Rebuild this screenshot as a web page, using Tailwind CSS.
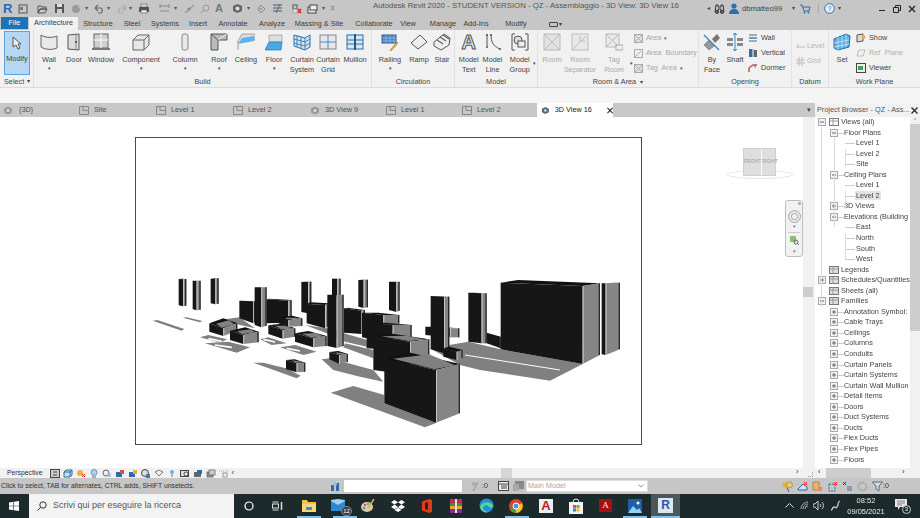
<!DOCTYPE html>
<html lang="it">
<head>
<meta charset="UTF-8">
<title>Autodesk Revit 2020</title>
<script src="https://cdn.jsdelivr.net/npm/@tailwindcss/browser@4"></script>
</head>
<body class="w-[920px] h-[518px] overflow-hidden bg-white">
<div class="w-[920px] h-[518px] flex flex-col blur-[0.4px] font-['Liberation_Sans',sans-serif] text-[7.3px] text-[#444]">

  <!-- title bar -->
  <div class="h-[17px] bg-[#c6c6c6] flex items-center relative">
    <span class="ml-[3px] w-[10px] text-[13px] font-bold leading-none text-[#1f6fb5]">R</span>
    <div class="ml-[5px] flex items-center gap-[6px]">
      <svg class="w-[10px] h-[10px]" viewBox="0 0 10 10"><rect x="1" y="1" width="8" height="8" fill="none" stroke="#555"/><rect x="2" y="3" width="3" height="3" fill="#777"/></svg>
      <svg class="w-[11px] h-[10px] ml-[3px]" viewBox="0 0 11 10"><path d="M1 2h3l1 1h4v2H3L1 9zM3 5h7L8 9H1z" fill="none" stroke="#555"/></svg>
      <svg class="w-[11px] h-[11px]" viewBox="0 0 11 11"><rect x="1" y="1" width="9" height="9" fill="#555"/><rect x="3" y="1" width="5" height="3" fill="#ddd"/><rect x="3" y="6" width="5" height="4" fill="#ccc"/></svg>
      <svg class="w-[11px] h-[11px]" viewBox="0 0 11 11"><circle cx="5" cy="6" r="4" fill="#999"/><path d="M6 1l4 2-2 3z" fill="#bbb"/></svg>
      <span class="text-[6px] -ml-[3px] text-[#555]">▾</span>
      <svg class="w-[11px] h-[10px]" viewBox="0 0 11 10"><path d="M1 4h6a3 3 0 010 5H4M1 4l3-3M1 4l3 3" fill="none" stroke="#666" stroke-width="1.2"/></svg>
      <span class="text-[6px] -ml-[4px] text-[#555]">▾</span>
      <svg class="w-[11px] h-[10px]" viewBox="0 0 11 10"><path d="M10 4H4a3 3 0 000 5h3M10 4L7 1M10 4L7 7" fill="none" stroke="#aaa" stroke-width="1.2"/></svg>
      <span class="text-[6px] -ml-[4px] text-[#555]">▾</span>
      <svg class="w-[12px] h-[11px]" viewBox="0 0 12 11"><rect x="1" y="4" width="10" height="5" fill="#555"/><rect x="3" y="1" width="6" height="3" fill="#ddd" stroke="#555" stroke-width=".6"/><rect x="3" y="7" width="6" height="3" fill="#eee" stroke="#555" stroke-width=".6"/></svg>
    </div>
    <div class="ml-[9px] flex items-center gap-[5px]">
      <svg class="w-[11px] h-[9px]" viewBox="0 0 11 9"><path d="M1 2h9M1 7h9M1 0v4M10 0v4" stroke="#888" fill="none"/></svg>
      <span class="text-[6px] -ml-[1px] text-[#555]">▾</span>
      <svg class="w-[11px] h-[10px] ml-[2px]" viewBox="0 0 11 10"><path d="M1 9l9-8" stroke="#999" stroke-width="1.4"/><circle cx="5" cy="5" r="1.5" fill="#888"/></svg>
      <svg class="w-[10px] h-[10px]" viewBox="0 0 10 10"><circle cx="6" cy="4" r="3" fill="none" stroke="#999"/><path d="M1 9l3-3" stroke="#999"/></svg>
      <span class="text-[11px] leading-none font-bold text-[#777]">A</span>
    </div>
    <div class="ml-[9px] flex items-center gap-[5px]">
      <svg class="w-[11px] h-[11px]" viewBox="0 0 11 11"><path d="M5.500 1l4.500 2v5l-4.500 2L1 8V3z" fill="#666"/><circle cx="5.500" cy="5.500" r="2" fill="#ddd"/></svg>
      <span class="text-[6px] -ml-[1px] text-[#555]">▾</span>
      <svg class="w-[10px] h-[10px] ml-[1px]" viewBox="0 0 10 10"><path d="M5 1l4 4-4 4-3-4z" fill="none" stroke="#888"/><circle cx="5" cy="5" r="1" fill="#888"/></svg>
      <svg class="w-[11px] h-[11px] ml-[1px]" viewBox="0 0 11 11"><path d="M1 2h9M1 5h9M1 8h9" stroke="#555"/><path d="M8 1L4 10" stroke="#2a7ac0"/></svg>
    </div>
    <div class="ml-[9px] flex items-center gap-[4px]">
      <svg class="w-[10px] h-[10px]" viewBox="0 0 10 10"><rect x="1" y="1" width="4" height="4" fill="none" stroke="#555"/><rect x="1" y="5" width="4" height="4" fill="#ddd" stroke="#888" stroke-width=".5"/><path d="M6 5l3 4M9 5L6 9" stroke="#d22" stroke-width="1.3"/></svg>
      <svg class="w-[11px] h-[10px] ml-[1px]" viewBox="0 0 11 10"><rect x="1" y="3" width="8" height="6" fill="#eee" stroke="#444"/><rect x="3" y="1" width="7" height="5" fill="#eee" stroke="#444"/></svg>
      <span class="text-[6px] text-[#555]">▾</span>
      <span class="text-[6px] ml-[2px] text-[#555]">≡</span>
    </div>
    <span class="absolute left-[373px] top-0 text-[7.800px] leading-[12px] whitespace-nowrap text-[#555]">Autodesk Revit 2020 - STUDENT VERSION - QZ - Assemblaggio - 3D View: 3D View 16</span>
    <div class="absolute left-[707px] top-0 h-[17px] flex items-center">
      <span class="text-[6px] text-[#444]">◂</span>
      <svg class="ml-[4px] w-[11px] h-[10px]" viewBox="0 0 11 10"><path d="M2 1h2v2h3V1h2l1 7H7V5H4v3H1z" fill="none" stroke="#333"/><circle cx="3" cy="8" r="1.500" fill="none" stroke="#333"/><circle cx="8" cy="8" r="1.500" fill="none" stroke="#333"/></svg>
      <svg class="ml-[4px] w-[10px] h-[11px]" viewBox="0 0 10 11"><circle cx="5" cy="3" r="2.600" fill="#2f6fb0"/><path d="M0 11c0-4 3-5 5-5s5 1 5 5z" fill="#2f6fb0"/></svg>
      <span class="ml-[3px] w-[40px] text-[7.600px] text-[#444]">dbmatteo99</span>
      <span class="ml-[10px] text-[6px] text-[#444]">▾</span>
      <svg class="ml-[5px] w-[11px] h-[10px]" viewBox="0 0 11 10"><path d="M0 1h2l2 6h5l1-4H3" fill="none" stroke="#2f6fa0"/><circle cx="4.500" cy="8.500" r="1" fill="#2f6fa0"/><circle cx="8.500" cy="8.500" r="1" fill="#2f6fa0"/></svg>
      <span class="ml-[7px] w-px h-[11px] bg-[#aaa]"></span>
      <svg class="ml-[5px] w-[11px] h-[11px]" viewBox="0 0 11 11"><circle cx="5.500" cy="5.500" r="4.800" fill="#e8eef5" stroke="#2f6fb0"/><text x="5.500" y="8" font-size="7" text-anchor="middle" fill="#2f6fb0" font-family="Liberation Sans">?</text></svg>
      <span class="ml-[3px] text-[6px] text-[#444]">▾</span>
    </div>
    <div class="absolute left-[879px] top-0 h-[17px] flex items-center">
      <span class="w-[6px] h-px mt-[4px] bg-[#222]"></span>
      <svg class="ml-[8px] w-[8px] h-[8px]" viewBox="0 0 8 8"><path d="M.5 2.500h5v5h-5zM2.500 2.500v-2h5v5h-2" fill="none" stroke="#222"/></svg>
      <svg class="ml-[7px] w-[8px] h-[8px]" viewBox="0 0 8 8"><path d="M1 1l6 6M7 1L1 7" stroke="#222" stroke-width="1.300"/></svg>
    </div>
  </div>

  <!-- ribbon tabs -->
  <div class="h-[13px] bg-[#c6c6c6] flex items-end text-[#3c3c3c]">
    <span class="ml-px w-[27px] h-[12px] mb-px bg-[#1b74b8] text-white flex items-center justify-center">File</span>
    <span class="ml-px w-[49px] h-[13px] bg-[#f1f1f1] flex items-center justify-center">Architecture</span>
    <div class="h-[12px] flex items-center whitespace-nowrap">
      <span class="w-[40px] text-center">Structure</span>
      <span class="w-[28px] text-center">Steel</span>
      <span class="w-[38px] text-center">Systems</span>
      <span class="w-[28px] text-center">Insert</span>
      <span class="w-[42px] text-center">Annotate</span>
      <span class="w-[36px] text-center">Analyze</span>
      <span class="w-[58px] text-center">Massing &amp; Site</span>
      <span class="w-[52px] text-center">Collaborate</span>
      <span class="w-[16px] text-center">View</span>
      <span class="ml-[10px] w-[34px] text-center">Manage</span>
      <span class="w-[32px] text-center">Add-Ins</span>
      <span class="w-[48px] text-center">Modify</span>
      <span class="ml-[9px] flex items-center gap-[1px]"><span class="w-[9px] h-[5px] border border-[#444] rounded-[1px]"></span><span class="text-[6px]">▾</span></span>
    </div>
  </div>

  <!-- ribbon panels -->
  <div class="h-[58px] bg-[#f1f1f1] border-b border-[#dcdcdc] flex text-center leading-[9.600px]">
    <section class="w-[34px] flex flex-col border-r border-[#e2e2e2]">
      <div class="h-[46px] pt-px pl-[4px]">
        <div class="w-[26px] h-[44px] bg-[#b5d7f3] border border-[#5fa4d8] flex flex-col items-center">
          <svg class="w-[12px] h-[14px] mt-[4px]" viewBox="0 0 12 14"><path d="M2 1v10l3-2 2 4 2-1-2-4h3z" fill="#eee" stroke="#555"/></svg>
          <span class="mt-[4px]">Modify</span>
        </div>
      </div>
      <div class="h-[11px] leading-[11px] flex items-center pl-[4px]">Select <span class="text-[6px] ml-[3px]">▾</span></div>
    </section>

    <section class="w-[338px] flex flex-col border-r border-[#e2e2e2]">
      <div class="h-[46px] flex">
        <div class="w-[30px] flex flex-col items-center pt-[3px]"><svg class="w-[18px] h-[18px]" viewBox="0 0 18 18"><path d="M1 2c5 3 11 3 16 1v12c-5 2-11 2-16-1z" fill="#e8e8e8" stroke="#666"/></svg><span class="mt-[4px]">Wall</span><span class="text-[5px] leading-[7px]">▾</span></div>
        <div class="w-[20px] flex flex-col items-center pt-[3px]"><svg class="w-[14px] h-[18px]" viewBox="0 0 14 18"><path d="M1 2l11-1v16l-11-1z" fill="#ddd" stroke="#555"/><path d="M9 2v14" stroke="#888"/><circle cx="9" cy="9" r=".9" fill="#333"/></svg><span class="mt-[4px]">Door</span></div>
        <div class="w-[34px] flex flex-col items-center pt-[3px]"><svg class="w-[18px] h-[18px]" viewBox="0 0 18 18"><rect x="2" y="1" width="14" height="14" fill="#cfcfcf" stroke="#666"/><path d="M9 1v14M2 7h14" stroke="#eee" stroke-width="1.500"/><path d="M0 16h18" stroke="#777" stroke-width="2"/></svg><span class="mt-[4px]">Window</span></div>
        <div class="w-[46px] flex flex-col items-center pt-[3px]"><svg class="w-[18px] h-[18px]" viewBox="0 0 18 18"><path d="M1 7l5-5h11v10l-5 5H1z" fill="#e6e6e6" stroke="#666"/><path d="M1 7h11v10M12 7l5-5" fill="none" stroke="#666"/></svg><span class="mt-[4px]">Component</span><span class="text-[5px] leading-[7px]">▾</span></div>
        <div class="w-[42px] flex flex-col items-center pt-[3px]"><svg class="w-[10px] h-[18px]" viewBox="0 0 10 18"><rect x="2" y="1" width="6" height="16" rx="2" fill="#e8e8e8" stroke="#888"/></svg><span class="mt-[4px]">Column</span><span class="text-[5px] leading-[7px]">▾</span></div>
        <div class="w-[26px] flex flex-col items-center pt-[3px]"><svg class="w-[18px] h-[18px]" viewBox="0 0 18 18"><path d="M1 1h16v6H8v10H1z" fill="#bbb" stroke="#555"/><path d="M1 1l7 6" stroke="#555"/><path d="M17 1l-9 6" stroke="#eee"/></svg><span class="mt-[4px]">Roof</span><span class="text-[5px] leading-[7px]">▾</span></div>
        <div class="w-[28px] flex flex-col items-center pt-[3px]"><svg class="w-[18px] h-[18px]" viewBox="0 0 18 18"><path d="M5 1h13v6L0 10z" fill="#ddd" stroke="#888" stroke-width=".7"/><path d="M5 5l12-2v5L1 11z" fill="#5eb2ea"/><path d="M1 11v6" stroke="#999"/></svg><span class="mt-[4px]">Ceiling</span></div>
        <div class="w-[28px] flex flex-col items-center pt-[3px]"><svg class="w-[18px] h-[18px]" viewBox="0 0 18 18"><path d="M4 9V2h13v7z" fill="#ddd" stroke="#999" stroke-width=".7"/><path d="M4 9h13l-1 8H0z" fill="#4ba7e6" stroke="#2a7ab5" stroke-width=".7"/></svg><span class="mt-[4px]">Floor</span><span class="text-[5px] leading-[7px]">▾</span></div>
        <div class="w-[28px] flex flex-col items-center pt-[3px]"><svg class="w-[18px] h-[18px]" viewBox="0 0 18 18"><path d="M1 2l11 3 5-3v12l-5 3-11-4z" fill="#cfe5f5" stroke="#2a6fa8"/><path d="M4 3v11M8 4v12M12 5v12M1 6l11 3 5-3M1 10l11 3 5-3" stroke="#2a6fa8" stroke-width=".8" fill="none"/></svg><span class="mt-[4px]">Curtain<br>System</span></div>
        <div class="w-[24px] flex flex-col items-center pt-[3px]"><svg class="w-[18px] h-[18px]" viewBox="0 0 18 18"><rect x="1" y="2" width="16" height="14" fill="#e6e6e6" stroke="#888"/><path d="M1 9h16M9 2v14" stroke="#3d8fd0"/></svg><span class="mt-[4px]">Curtain<br>Grid</span></div>
        <div class="w-[30px] flex flex-col items-center pt-[3px]"><svg class="w-[18px] h-[18px]" viewBox="0 0 18 18"><rect x="1" y="2" width="16" height="14" fill="#d6e6f3" stroke="#2a6fa8"/><path d="M1 7h16M1 11h16" stroke="#2a6fa8"/><path d="M9 1v16" stroke="#1d5a90" stroke-width="2"/></svg><span class="mt-[4px]">Mullion</span></div>
      </div>
      <div class="h-[11px] leading-[11px]">Build</div>
    </section>

    <section class="w-[83px] flex flex-col border-r border-[#e2e2e2]">
      <div class="h-[46px] flex">
        <div class="w-[36px] flex flex-col items-center pt-[3px]"><svg class="w-[18px] h-[18px]" viewBox="0 0 18 18"><rect x="1" y="2" width="14" height="8" fill="#4a86c0" stroke="#2a5f95"/><path d="M1 5h14M1 8h14M5 2v8M9 2v8M13 2v8" stroke="#bcd6ee" stroke-width=".5"/><path d="M16 9l-6 7-1 2 2-1 6-7z" fill="#e2b23a" stroke="#8a6a18" stroke-width=".5"/></svg><span class="mt-[4px]">Railing</span><span class="text-[5px] leading-[7px]">▾</span></div>
        <div class="w-[22px] flex flex-col items-center pt-[3px]"><svg class="w-[18px] h-[18px]" viewBox="0 0 18 18"><path d="M1 10l9-8 7 7-9 7z" fill="#eee" stroke="#555"/></svg><span class="mt-[4px]">Ramp</span></div>
        <div class="w-[24px] flex flex-col items-center pt-[3px]"><svg class="w-[18px] h-[18px]" viewBox="0 0 18 18"><path d="M1 9l10-8 6 4-1 7-8 5-7-4z" fill="#eee" stroke="#555"/><path d="M4 7l6 4M7 4l6 4M10 2l6 4" stroke="#666" stroke-width="1.300"/></svg><span class="mt-[4px]">Stair</span></div>
      </div>
      <div class="h-[11px] leading-[11px]">Circulation</div>
    </section>

    <section class="w-[83px] flex flex-col border-r border-[#e2e2e2]">
      <div class="h-[46px] flex">
        <div class="w-[28px] flex flex-col items-center pt-[3px]"><span class="h-[18px] text-[20px] leading-[18px] font-bold text-[#e8e8e8] [-webkit-text-stroke:1px_#555]">A</span><span class="mt-[4px]">Model<br>Text</span></div>
        <div class="w-[20px] flex flex-col items-center pt-[3px]"><svg class="w-[18px] h-[18px]" viewBox="0 0 18 18"><path d="M3 1v12M7 1c0 8 2 12 9 15" fill="none" stroke="#555"/><circle cx="3" cy="2" r="1" fill="#555"/><circle cx="3" cy="14" r="1" fill="#555"/><circle cx="7" cy="2" r="1" fill="#555"/><circle cx="16" cy="16" r="1" fill="#555"/></svg><span class="mt-[4px]">Model<br>Line</span></div>
        <div class="w-[35px] flex flex-col items-center pt-[3px] relative"><svg class="w-[18px] h-[18px]" viewBox="0 0 18 18"><path d="M4 1H1v16h3M14 1h3v16h-3" fill="none" stroke="#555"/><circle cx="7" cy="7" r="4" fill="#ddd" stroke="#555"/><rect x="7" y="8" width="7" height="6" fill="#eee" stroke="#555"/></svg><span class="mt-[4px]">Model<br>Group</span><span class="absolute right-[1px] top-[29px] text-[5px]">▾</span></div>
      </div>
      <div class="h-[11px] leading-[11px]">Model</div>
    </section>

    <section class="w-[161px] flex flex-col border-r border-[#e2e2e2]">
      <div class="h-[46px] flex text-[#a9a9a9]">
        <div class="w-[28px] flex flex-col items-center pt-[3px]"><svg class="w-[18px] h-[18px]" viewBox="0 0 18 18"><rect x="1" y="1" width="16" height="16" fill="#e2e2e2" stroke="#bbb"/><path d="M1 1l16 16M17 1L1 17" stroke="#bbb"/></svg><span class="mt-[4px]">Room</span></div>
        <div class="w-[28px] flex flex-col items-center pt-[3px] whitespace-nowrap"><svg class="w-[18px] h-[18px]" viewBox="0 0 18 18"><rect x="1" y="1" width="16" height="16" fill="#e8e8e8" stroke="#bbb"/><path d="M1 17L15 3M9 3v5h5" stroke="#bbb" fill="none"/></svg><span class="mt-[4px]">Room<br>Separator</span></div>
        <div class="w-[40px] flex flex-col items-center pt-[3px] relative"><svg class="w-[18px] h-[18px]" viewBox="0 0 18 18"><rect x="1" y="1" width="13" height="13" fill="#e8e8e8" stroke="#bbb"/><path d="M1 1l13 13M14 1L1 14" stroke="#bbb"/><rect x="11" y="12" width="7" height="5" fill="#eee" stroke="#aaa"/></svg><span class="mt-[4px]">Tag<br>Room</span><span class="absolute right-[1px] top-[29px] text-[5px] text-[#444]">▾</span></div>
        <div class="flex flex-col gap-[5px] pt-[3px] text-left whitespace-nowrap">
          <div class="h-[10px] leading-[10px] flex items-center gap-[3px]"><svg class="w-[9px] h-[9px]" viewBox="0 0 9 9"><rect x=".5" y=".5" width="8" height="8" fill="#e2e2e2" stroke="#aaa"/><path d="M1 1l7 7M8 1L1 8" stroke="#aaa"/></svg>Area <span class="text-[5px] text-[#555]">▾</span></div>
          <div class="h-[10px] leading-[10px] flex items-center gap-[3px]"><svg class="w-[9px] h-[9px]" viewBox="0 0 9 9"><rect x=".5" y=".5" width="8" height="8" fill="#eee" stroke="#aaa"/><path d="M1 8l6-6" stroke="#aaa"/></svg>Area&nbsp; Boundary</div>
          <div class="h-[10px] leading-[10px] flex items-center gap-[3px]"><svg class="w-[9px] h-[9px]" viewBox="0 0 9 9"><rect x=".5" y=".5" width="8" height="8" fill="#e2e2e2" stroke="#aaa"/><path d="M1 1l7 7M8 1L1 8" stroke="#aaa"/></svg>Tag&nbsp; Area <span class="text-[5px] text-[#555]">▾</span></div>
        </div>
      </div>
      <div class="h-[11px] leading-[11px]">Room &amp; Area <span class="text-[6px] ml-[2px]">▾</span></div>
    </section>

    <section class="w-[93px] flex flex-col border-r border-[#e2e2e2]">
      <div class="h-[46px] flex">
        <div class="w-[26px] flex flex-col items-center pt-[3px]"><svg class="w-[18px] h-[18px]" viewBox="0 0 18 18"><path d="M1 12l5-5 5 6-5 4z" fill="#999" stroke="#666" stroke-width=".6"/><path d="M9 6l5-5 3 4-5 5z" fill="#777"/><path d="M1 2l15 15" stroke="#2d86cc" stroke-width="1.200"/></svg><span class="mt-[4px]">By<br>Face</span></div>
        <div class="w-[20px] flex flex-col items-center pt-[3px]"><svg class="w-[18px] h-[18px]" viewBox="0 0 18 18"><path d="M1 5h6v3H1zM11 5h6v3h-6zM1 10h6v3H1zM11 10h6v3h-6z" fill="#888"/><path d="M9 0v18M7 2l2-2 2 2M7 16l2 2 2-2" stroke="#2d86cc" fill="none"/></svg><span class="mt-[4px]">Shaft</span></div>
        <div class="flex flex-col gap-[5px] pt-[3px] text-left pl-[3px]">
          <div class="h-[10px] leading-[10px] flex items-center gap-[3px]"><svg class="w-[10px] h-[10px]" viewBox="0 0 10 10"><path d="M1 2h8M1 8h8" stroke="#666"/><path d="M1 5h8" stroke="#2d86cc" stroke-width="1.500"/></svg>Wall</div>
          <div class="h-[10px] leading-[10px] flex items-center gap-[3px]"><svg class="w-[10px] h-[10px]" viewBox="0 0 10 10"><path d="M1 1h3v8H1z" fill="#2d6da6"/><path d="M6 2h3v7H6z" fill="#666"/><path d="M5 1v8" stroke="#2d86cc"/></svg>Vertical</div>
          <div class="h-[10px] leading-[10px] flex items-center gap-[3px]"><svg class="w-[10px] h-[10px]" viewBox="0 0 10 10"><path d="M1 9V5l4-3h4" fill="none" stroke="#c9553f" stroke-width="1.500"/><path d="M7 1v4" stroke="#2d86cc"/></svg>Dormer</div>
        </div>
      </div>
      <div class="h-[11px] leading-[11px]">Opening</div>
    </section>

    <section class="w-[37px] flex flex-col border-r border-[#e2e2e2]">
      <div class="h-[46px] flex flex-col gap-[5px] pt-[11px] pl-[4px] text-left text-[#b5b5b5]">
        <div class="h-[10px] leading-[10px] flex items-center gap-[2px]"><svg class="w-[9px] h-[9px]" viewBox="0 0 9 9"><path d="M0 5h9" stroke="#bbb"/><path d="M2 2v3" stroke="#bbb"/></svg>Level</div>
        <div class="h-[10px] leading-[10px] flex items-center gap-[2px]"><svg class="w-[9px] h-[9px]" viewBox="0 0 9 9"><path d="M0 3h9M0 6h9M3 0v9M6 0v9" stroke="#bbb"/></svg>Grid</div>
      </div>
      <div class="h-[11px] leading-[11px] text-[#444]">Datum</div>
    </section>

    <section class="flex-1 flex flex-col">
      <div class="h-[46px] flex">
        <div class="w-[26px] flex flex-col items-center pt-[3px]"><svg class="w-[18px] h-[18px]" viewBox="0 0 18 18"><path d="M1 6l12-5 4 2-1 11-11 3-4-2z" fill="#5dafe6" stroke="#1f6aa5"/><path d="M5 4v13M9 2.500v13M13 1v13M1 10l15-3M1 14l15-3" stroke="#d5ecfb" stroke-width=".7"/></svg><span class="mt-[4px]">Set</span></div>
        <div class="flex flex-col gap-[5px] pt-[3px] text-left pl-px">
          <div class="h-[10px] leading-[10px] flex items-center gap-[3px]"><svg class="w-[10px] h-[10px]" viewBox="0 0 10 10"><path d="M1 2l6-1v7l-6 1z" fill="#ddd" stroke="#555"/><circle cx="7.500" cy="4" r="2" fill="#e8b23a"/></svg>Show</div>
          <div class="h-[10px] leading-[10px] flex items-center gap-[3px] text-[#b0b0b0]"><svg class="w-[10px] h-[10px]" viewBox="0 0 10 10"><path d="M1 8l2-6h6l-2 6z" fill="none" stroke="#bbb"/></svg>Ref&nbsp; Plane</div>
          <div class="h-[10px] leading-[10px] flex items-center gap-[3px]"><svg class="w-[10px] h-[10px]" viewBox="0 0 10 10"><rect x=".5" y=".5" width="9" height="9" fill="#e8f0e0" stroke="#444"/><rect x="2" y="3" width="5" height="4" fill="#4a9a5a"/></svg>Viewer</div>
        </div>
      </div>
      <div class="h-[11px] leading-[11px]">Work Plane</div>
    </section>
  </div>

  <div class="h-[15px] bg-[#f5f5f5]"></div>

  <!-- view tabs -->
  <div class="h-[14px] bg-[#c8c8c8] flex items-center text-[#555]">
    <div class="w-[77px] pl-[3px] flex items-center gap-[6px]"><svg class="w-[10px] h-[9px]" viewBox="0 0 10 9"><path d="M5 .5l4 2v4l-4 2-4-2v-4z" fill="#999"/><circle cx="5" cy="4.500" r="1.500" fill="#ddd"/></svg>{3D}</div>
    <div class="w-[77px] pl-[2px] flex items-center gap-[5px]"><svg class="w-[10px] h-[9px]" viewBox="0 0 10 9"><path d="M.5.5h9v8h-9zM4 .5v4h5.500" fill="none" stroke="#888"/></svg>Site</div>
    <div class="w-[77px] pl-[2px] flex items-center gap-[5px]"><svg class="w-[10px] h-[9px]" viewBox="0 0 10 9"><path d="M.5.5h9v8h-9zM4 .5v4h5.500" fill="none" stroke="#888"/></svg>Level 1</div>
    <div class="w-[77px] pl-[2px] flex items-center gap-[5px]"><svg class="w-[10px] h-[9px]" viewBox="0 0 10 9"><path d="M.5.5h9v8h-9zM4 .5v4h5.500" fill="none" stroke="#888"/></svg>Level 2</div>
    <div class="w-[76px] pl-[2px] flex items-center gap-[5px]"><svg class="w-[10px] h-[9px]" viewBox="0 0 10 9"><path d="M5 .5l4 2v4l-4 2-4-2v-4z" fill="#999"/><circle cx="5" cy="4.500" r="1.500" fill="#ddd"/></svg>3D View 9</div>
    <div class="w-[76px] pl-[2px] flex items-center gap-[5px]"><svg class="w-[10px] h-[9px]" viewBox="0 0 10 9"><path d="M.5.5h9v8h-9zM4 .5v4h5.500" fill="none" stroke="#888"/></svg>Level 1</div>
    <div class="w-[77px] pl-[2px] flex items-center gap-[5px]"><svg class="w-[10px] h-[9px]" viewBox="0 0 10 9"><path d="M.5.5h9v8h-9zM4 .5v4h5.500" fill="none" stroke="#888"/></svg>Level 2</div>
    <div class="w-[76px] h-[14px] bg-white pl-[4px] flex items-center text-[#222] whitespace-nowrap font-medium"><svg class="w-[10px] h-[9px] mr-[5px]" viewBox="0 0 10 9"><path d="M5 .5l4 2v4l-4 2-4-2v-4z" fill="#4d6d80"/><circle cx="5" cy="4.500" r="1.500" fill="#ddd"/></svg>3D View 16<svg class="ml-[15px] w-[7px] h-[7px]" viewBox="0 0 7 7"><path d="M.5.500l6 6M6.500.500l-6 6" stroke="#222" stroke-width="1.200"/></svg></div>
    <span class="w-[202px] pr-[4px] text-right text-[7px] text-[#444]">▾</span>
    <div class="w-[105px] h-[14px] bg-[#f1f1f1] pl-[2px] flex items-center justify-between pr-[2px] text-[#555] whitespace-nowrap">Project Browser - QZ - Ass...<svg class="w-[7px] h-[7px]" viewBox="0 0 7 7"><path d="M.5.500l6 6M6.500.500l-6 6" stroke="#222" stroke-width="1.200"/></svg></div>
  </div>

  <!-- work area -->
  <div class="h-[351px] flex">
    <div class="w-[813px] flex">
      <div class="w-[803px] h-[351px] bg-white relative overflow-hidden">
        <div class="absolute left-[135px] top-[20px] w-[507px] h-[308px] border border-[#4a4a4a]"></div>
        <svg id="model" class="absolute left-0 top-0" width="803" height="351" viewBox="0 117 803 351"></svg>

        <!-- view cube -->
        <div class="absolute left-[726px] top-[30px] w-[68px] h-[34px]">
          <div class="absolute left-[1px] top-[23px] w-[66px] h-[9px] rounded-[50%] border border-[#e4e4e4]"></div>
          <div class="absolute left-[17px] top-[1px] w-[33px] h-[28px] bg-[#dedede] border border-[#cfcfcf] flex text-[5px] text-[#a0a0a0]">
            <span class="flex-1 flex items-center justify-center border-r border-white">FRONT</span>
            <span class="flex-1 flex items-center justify-center">RIGHT</span>
          </div>
        </div>

        <!-- navigation bar -->
        <div class="absolute left-[785px] top-[83px] w-[18px] h-[57px] bg-[#f2f2f2] border border-[#bdbdbd] rounded-[3px] flex flex-col items-center">
          <span class="absolute right-[1px] top-[1px] w-[3px] h-[3px] rounded-full bg-[#aaa]"></span>
          <svg class="mt-[9px] w-[13px] h-[13px]" viewBox="0 0 13 13"><circle cx="6.500" cy="6.500" r="6" fill="#e4e4e4" stroke="#aaa"/><circle cx="6.500" cy="6.500" r="3" fill="#f4f4f4" stroke="#aaa"/></svg>
          <span class="text-[5px] leading-[7px] text-[#777]">▾</span>
          <span class="w-[12px] h-px bg-[#ccc] mt-[2px]"></span>
          <svg class="mt-[3px] w-[9px] h-[9px]" viewBox="0 0 9 9"><rect x="0" y="0" width="6" height="6" fill="#8bbf73"/><circle cx="6" cy="6" r="2" fill="none" stroke="#666"/><path d="M7.500 7.500L9 9" stroke="#666"/></svg>
          <span class="mt-[3px] text-[5px] leading-[7px] text-[#777]">▾</span>
        </div>
      </div>
      <!-- vertical scrollbar -->
      <div class="w-[10px] bg-[#f1f1f1] flex flex-col"><div class="h-[170px]"></div><div class="h-[10px] bg-[#cdcdcd]"></div></div>
    </div>
    <div class="w-[2px] bg-[#f1f1f1]"></div>

    <!-- project browser -->
    <div class="flex-1 bg-white relative overflow-hidden">
      <div id="tree" class="text-[#444]"></div>
      <div class="absolute right-0 top-0 w-[10px] h-[351px] bg-[#f1f1f1]"><div class="h-[7px] text-center text-[5px] leading-[7px]">⌃</div><div class="h-[207px] bg-[#cdcdcd]"></div></div>
    </div>
  </div>

  <!-- view control bar / scrollbars -->
  <div class="h-[10px] bg-[#f1f1f1] flex items-center text-[6.800px] relative">
    <span class="ml-[7px] text-[#333]">Perspective</span>
    <div class="ml-[7px] flex items-center gap-[3px]">
      <svg class="w-[10px] h-[9px]" viewBox="0 0 10 9"><rect x=".5" y=".5" width="9" height="8" fill="#ccc" stroke="#444"/><path d="M3 3h4M3 6h4" stroke="#444"/></svg>
      <svg class="w-[10px] h-[9px]" viewBox="0 0 10 9"><path d="M1 3l2-2h6v5l-2 2H1zM1 3h6v5M7 3l2-2" fill="#cfe0ee" stroke="#1f6aa5"/></svg>
      <svg class="w-[10px] h-[9px]" viewBox="0 0 10 9"><circle cx="4" cy="4" r="3" fill="#eab43a"/><path d="M6 5l3 3M9 5L6 8" stroke="#d22"/></svg>
      <svg class="w-[10px] h-[9px]" viewBox="0 0 10 9"><circle cx="5" cy="3.500" r="3" fill="#a8d2ee" stroke="#2d6da6" stroke-width=".6"/><path d="M3 8h4" stroke="#666"/></svg>
      <svg class="w-[10px] h-[9px]" viewBox="0 0 10 9"><circle cx="4" cy="4" r="3" fill="#eee" stroke="#666"/><circle cx="7" cy="6" r="2" fill="#8fbfe0"/></svg>
      <svg class="w-[10px] h-[9px]" viewBox="0 0 10 9"><rect x="1" y="3" width="6" height="5" fill="#2d6da6"/><rect x="5" y="1" width="4" height="4" fill="#c9553f"/></svg>
      <svg class="w-[10px] h-[9px]" viewBox="0 0 10 9"><rect x="1" y="3" width="6" height="5" fill="#2d6da6"/><rect x="5" y="1" width="4" height="4" fill="#e8b23a"/></svg>
      <svg class="w-[10px] h-[9px]" viewBox="0 0 10 9"><circle cx="4" cy="4" r="3.500" fill="#ddd" stroke="#444"/><rect x="5" y="5" width="4" height="4" fill="#4d7a9a"/></svg>
      <svg class="w-[10px] h-[9px]" viewBox="0 0 10 9"><path d="M1 3l4-2 4 2-4 4z" fill="#eee" stroke="#777"/></svg>
      <svg class="w-[10px] h-[9px]" viewBox="0 0 10 9"><circle cx="5" cy="3" r="2" fill="#6cb0e2"/><path d="M5 5v3" stroke="#777"/></svg>
      <svg class="w-[10px] h-[9px]" viewBox="0 0 10 9"><rect x=".5" y="1.500" width="8" height="6" fill="#ddd" stroke="#444"/><circle cx="6" cy="5" r="2" fill="#fff" stroke="#444"/></svg>
      <svg class="w-[10px] h-[9px]" viewBox="0 0 10 9"><rect x="1" y="3" width="7" height="5" fill="#666"/><rect x="4" y="1" width="5" height="4" fill="#2d6da6"/></svg>
      <svg class="w-[10px] h-[9px]" viewBox="0 0 10 9"><rect x="1" y="3" width="6" height="5" fill="#999" stroke="#444" stroke-width=".6"/><rect x="3" y="1" width="6" height="5" fill="#ccc" stroke="#444" stroke-width=".6"/></svg>
      <svg class="w-[10px] h-[9px]" viewBox="0 0 10 9"><path d="M0 2h10" stroke="#aaa" stroke-dasharray="1 1"/><rect x="4" y="4" width="4" height="4" fill="none" stroke="#999"/></svg>
      <span class="text-[#333] text-[8px] leading-none">‹</span>
    </div>
    <div class="absolute left-[501px] top-0 w-[11px] h-[10px] bg-[#d6d6d6]"></div>
    <span class="absolute left-[796px] top-[-1px] text-[8px] leading-[10px] text-[#333]">›</span>
    <span class="absolute left-[808px] top-[4px] w-[5px] h-[5px] border-r border-b border-dotted border-[#999]"></span>
    <div class="absolute left-[815px] top-0 w-[105px] h-[10px] bg-[#f1f1f1]">
      <span class="absolute left-[3px] top-[-1px] text-[8px] leading-[10px] text-[#333]">‹</span>
      <span class="absolute left-[11px] top-0 w-[45px] h-[10px] bg-[#cdcdcd]"></span>
      <span class="absolute left-[87px] top-[-1px] text-[8px] leading-[10px] text-[#333]">›</span>
    </div>
  </div>

  <!-- status bar -->
  <div class="h-[16px] bg-[#c6c6c6] relative text-[#333] flex items-center">
    <span class="ml-px whitespace-nowrap text-[6.800px]">Click to select, TAB for alternates, CTRL adds, SHIFT unselects.</span>
    <svg class="absolute left-[330px] top-[3px] w-[10px] h-[11px]" viewBox="0 0 10 11"><path d="M1 4h3v6H1zM6 2h3v8H6z" fill="#2d6da6"/><circle cx="5" cy="3" r="2" fill="#9ac0e0"/></svg>
    <div class="absolute left-[344px] top-[2px] w-[118px] h-[12px] bg-white"></div>
    <svg class="absolute left-[471px] top-[3px] w-[10px] h-[11px]" viewBox="0 0 10 11"><path d="M2 10l5-9" stroke="#aaa" stroke-width="2"/><circle cx="3" cy="3" r="2" fill="#aaa"/></svg>
    <span class="absolute left-[482px] top-[3px] text-[7px]">:0</span>
    <svg class="absolute left-[498px] top-[3px] w-[11px] h-[10px]" viewBox="0 0 11 10"><rect x=".5" y=".5" width="10" height="9" fill="#eee" stroke="#444"/><path d="M.5 3h10M3 5h6M3 7h6" stroke="#444"/></svg>
    <svg class="absolute left-[513px] top-[3px] w-[11px] h-[10px]" viewBox="0 0 11 10"><rect x="2" y="0" width="9" height="8" fill="#888"/><rect x="0" y="3" width="6" height="7" fill="#aaa"/></svg>
    <div class="absolute left-[526px] top-[2px] w-[122px] h-[12px] bg-white border border-[#ddd] pl-px text-[#a8a8a8] flex items-center justify-between pr-[3px]">Main Model<svg class="w-[6px] h-[4px]" viewBox="0 0 6 4"><path d="M.5.500L3 3l2.500-2.500" fill="none" stroke="#999"/></svg></div>
    <div class="absolute left-[782px] top-[3px] flex items-center gap-[4px]">
      <svg class="w-[11px] h-[11px]" viewBox="0 0 11 11"><circle cx="3.500" cy="4" r="3" fill="#e8b23a"/><circle cx="7.500" cy="4" r="3" fill="#eccb64" stroke="#666" stroke-width=".5"/><path d="M5 7l2 4" stroke="#555"/></svg>
      <svg class="w-[11px] h-[11px]" viewBox="0 0 11 11"><path d="M1 8l5-5 4 3v3H1z" fill="#cfe0ee" stroke="#1f6aa5"/><path d="M7 1l3 3M10 1L7 4" stroke="#d22"/></svg>
      <svg class="w-[11px] h-[11px]" viewBox="0 0 11 11"><rect x="1" y="1" width="6" height="8" fill="#e8b86a" stroke="#a4552a" stroke-width=".6"/><rect x="6" y="6" width="4" height="4" fill="#e88b5a"/></svg>
      <svg class="w-[11px] h-[11px]" viewBox="0 0 11 11"><path d="M2 3h6v7H2z" fill="none" stroke="#1f6aa5" stroke-dasharray="2 1"/><path d="M7 1l3 3M10 1L7 4" stroke="#d22"/></svg>
      <svg class="w-[11px] h-[11px]" viewBox="0 0 11 11"><path d="M1 1l3 3M4 1L1 4" stroke="#333"/><rect x="5" y="5" width="5" height="5" fill="#8a9aa8"/></svg>
      <svg class="w-[11px] h-[11px]" viewBox="0 0 11 11"><circle cx="5.500" cy="5.500" r="4" fill="none" stroke="#aaa" stroke-width="2" stroke-dasharray="2 .6"/></svg>
      <svg class="w-[11px] h-[11px]" viewBox="0 0 11 11"><path d="M.5 1h10L7 5v5L4 8V5z" fill="#cfe0ee" stroke="#666"/></svg>
      <span class="-ml-[4px] text-[7px]">:0</span>
    </div>
  </div>

  <!-- windows taskbar -->
  <div class="h-[24px] bg-[#1c2a2c] relative text-white">
    <svg class="absolute left-[9px] top-[7px] w-[10px] h-[10px]" viewBox="0 0 10 10"><path d="M0 1.500l4.400-.7v3.900H0zM5 .7l5-.7v4.700H5zM0 5.300h4.400v3.900L0 8.500zM5 5.300h5V10L5 9.300z" fill="#fff"/></svg>
    <div class="absolute left-[29px] top-0 w-[205px] h-[24px] bg-[#f3f3f3] flex items-center text-[9px] text-[#555]">
      <svg class="ml-[8px] w-[10px] h-[10px]" viewBox="0 0 10 10"><circle cx="6" cy="4" r="3.200" fill="none" stroke="#333"/><path d="M3.500 6.500L.5 9.500" stroke="#333"/></svg>
      <span class="ml-[6px] whitespace-nowrap">Scrivi qui per eseguire la ricerca</span>
    </div>
    <svg class="absolute left-[244px] top-[7px] w-[10px] h-[10px]" viewBox="0 0 10 10"><circle cx="5" cy="5" r="4" fill="none" stroke="#fff" stroke-width="1.200"/></svg>
    <svg class="absolute left-[272px] top-[7px] w-[11px] h-[10px]" viewBox="0 0 11 10"><path d="M.5 1h6M.5 9h6" stroke="#ddd"/><rect x=".5" y="3" width="6" height="4" fill="none" stroke="#ddd"/><path d="M9.500 1v8" stroke="#ddd" stroke-width="1.500"/></svg>
    <svg class="absolute left-[302px] top-[5px] w-[14px] h-[13px]" viewBox="0 0 14 13"><path d="M0 1h5l1 2h8v10H0z" fill="#f0c14b"/><rect x="0" y="5" width="14" height="8" fill="#f7d774"/><rect x="4" y="8" width="6" height="3" fill="#2f8fd8"/></svg>
    <span class="absolute left-[297px] bottom-0 w-[24px] h-[2px] bg-[#7fbfe8]"></span>
    <svg class="absolute left-[331px] top-[5px] w-[15px] h-[13px]" viewBox="0 0 15 13"><rect x="0" y="2" width="14" height="10" fill="#2a8ad4"/><path d="M0 2l7 4 7-4v-1L7 0 0 1z" fill="#9ed2f5"/></svg>
    <span class="absolute left-[341px] top-[12px] w-[11px] h-[10px] rounded-full bg-[#3c3c3c] border border-[#888] text-[6px] leading-[8px] text-center">12</span>
    <span class="absolute left-[333px] bottom-0 w-[24px] h-[2px] bg-[#7fbfe8]"></span>
    <svg class="absolute left-[361px] top-[5px] w-[14px] h-[14px]" viewBox="0 0 14 14"><ellipse cx="6" cy="8" rx="6" ry="5" fill="#d8c9ae"/><circle cx="4" cy="6" r="1" fill="#d23"/><circle cx="7" cy="5" r="1" fill="#2a8"/><circle cx="3" cy="9" r="1" fill="#27c"/><path d="M13 0L7 9" stroke="#e8b23a" stroke-width="1.500"/></svg>
    <svg class="absolute left-[391px] top-[6px] w-[14px] h-[12px]" viewBox="0 0 14 12"><path d="M3.500 0L7 2.300 3.500 4.600 0 2.300zM10.500 0L14 2.300l-3.500 2.300L7 2.300zM3.500 4.600L7 6.900 3.500 9.200 0 6.900zM10.500 4.600L14 6.900l-3.500 2.300L7 6.900zM7 7.600l3.500 2.300L7 12 3.500 9.900z" fill="#fff"/></svg>
    <svg class="absolute left-[421px] top-[5px] w-[12px] h-[14px]" viewBox="0 0 12 14"><path d="M1 2.500L8 0l3 1v12l-3 1-7-2.500z" fill="#e03a1a"/><path d="M4 4l3-1v8l-3-1z" fill="#1c2a2c"/></svg>
    <svg class="absolute left-[450px] top-[5px] w-[12px] h-[14px]" viewBox="0 0 12 14"><rect width="12" height="4" fill="#c2265e"/><rect y="4" width="12" height="3" fill="#3d8f3d"/><rect y="7" width="12" height="3" fill="#e8a72a"/><rect y="10" width="12" height="4" fill="#8a2a9a"/><rect x="5" width="2" height="14" fill="#ddd"/></svg>
    <svg class="absolute left-[479px] top-[4px] w-[15px] h-[15px]" viewBox="0 0 15 15"><circle cx="7.500" cy="7.500" r="7" fill="#1f8fd6"/><path d="M1 9c2-6 11-6 13-1 0 2-3 2-4 1-1-3-6-2-6 1 0 2 3 5 7 3-4 3-9 1-10-4z" fill="#5fd38f"/></svg>
    <svg class="absolute left-[509px] top-[5px] w-[14px] h-[14px]" viewBox="0 0 14 14"><circle cx="7" cy="7" r="7" fill="#e0402f"/><path d="M7 7L1 11a7 7 0 006 3z" fill="#3aa655"/><path d="M7 7l6-3a7 7 0 01-6 10z" fill="#f5c518"/><circle cx="7" cy="7" r="3" fill="#4a90e2" stroke="#fff"/></svg>
    <span class="absolute left-[505px] bottom-0 w-[24px] h-[2px] bg-[#7fbfe8]"></span>
    <div class="absolute left-[539px] top-[5px] w-[14px] h-[14px] bg-[#eee] text-[#b5232a] text-[13px] leading-[14px] font-bold text-center">A</div>
    <svg class="absolute left-[569px] top-[4px] w-[14px] h-[16px]" viewBox="0 0 14 16"><path d="M0 4h14v12H0z" fill="#f4f4f4"/><path d="M4 4a3 3 0 016 0" fill="none" stroke="#f4f4f4"/><rect x="4" y="7" width="3" height="3" fill="#e8502a"/><rect x="7.500" y="7" width="3" height="3" fill="#6ab82a"/><rect x="4" y="10.500" width="3" height="3" fill="#2a8ad4"/><rect x="7.500" y="10.500" width="3" height="3" fill="#f0b82a"/></svg>
    <div class="absolute left-[599px] top-[5px] w-[13px] h-[13px] bg-[#a51010] text-white text-[9px] leading-[13px] text-center font-['Liberation_Serif']">A</div>
    <svg class="absolute left-[628px] top-[5px] w-[14px] h-[14px]" viewBox="0 0 14 14"><rect width="14" height="14" fill="#1f5fa8"/><path d="M0 14l5-7 4 4 2-2 3 5z" fill="#8fd0f5"/><circle cx="10" cy="4" r="1.500" fill="#fff"/></svg>
    <span class="absolute left-[623px] bottom-0 w-[24px] h-[2px] bg-[#7fbfe8]"></span>
    <div class="absolute left-[651px] top-0 w-[29px] h-[24px] bg-[#49585a]">
      <div class="mx-auto mt-[4px] w-[15px] h-[15px] bg-[#dfe6ee] text-[#1f5fa8] text-[12px] leading-[15px] font-bold text-center">R</div>
      <span class="absolute left-0 bottom-0 w-[29px] h-[2px] bg-[#7fbfe8]"></span>
    </div>
    <svg class="absolute left-[785px] top-[9px] w-[9px] h-[5px]" viewBox="0 0 9 5"><path d="M.5 4.500l4-4 4 4" fill="none" stroke="#ddd"/></svg>
    <svg class="absolute left-[800px] top-[7px] w-[9px] h-[9px]" viewBox="0 0 9 9"><path d="M1 8a7 7 0 017-7M3 8a5 5 0 015-5M5 8a3 3 0 013-3" fill="none" stroke="#aaa"/></svg>
    <svg class="absolute left-[813px] top-[7px] w-[11px] h-[9px]" viewBox="0 0 11 9"><path d="M0 3h2l3-3v9L2 6H0z" fill="none" stroke="#ccc"/><path d="M7 3a2 2 0 010 3M9 1a5 5 0 010 7" fill="none" stroke="#ccc"/></svg>
    <svg class="absolute left-[830px] top-[6px] w-[11px] h-[11px]" viewBox="0 0 11 11"><path d="M1 10c2 0 1-3 3-3s1 2 3 0 0-5 3-6" fill="none" stroke="#ccc" stroke-width="1.300"/></svg>
    <div class="absolute left-[846px] top-[1px] w-[40px] text-center text-[7.500px] leading-[11px] text-[#e8e8e8] whitespace-nowrap">08:52<br>09/05/2021</div>
    <svg class="absolute left-[895px] top-[5px] w-[12px] h-[11px]" viewBox="0 0 12 11"><path d="M0 0h12v8H5L3 11V8H0z" fill="#e8e8e8"/><path d="M2 2h8M2 4h8M2 6h5" stroke="#555" stroke-width=".7"/></svg>
    <span class="absolute left-[902px] top-[11px] w-[9px] h-[9px] rounded-full bg-[#1c2a2c] border border-[#ccc] text-[6px] leading-[7px] text-center">3</span>
  </div>
</div>

<script>
// modello 3D: coordinate prese dallo zoom (origine 140,260, scala 3)
const model = document.getElementById('model');
let svg = '<g transform="translate(140 260) scale(0.33333)">';

function poly(points, fill) {
  svg += `<polygon points="${points.join(' ')}" fill="${fill}"/>`;
}

const shadows = [
  [38,182,52,180,133,207,125,212],
  [128,173,140,172,187,183,180,187],
  [255,178,298,172,345,205,300,195],
  [180,232,205,225,262,238,240,248],
  [195,250,265,245,330,262,290,278],
  [340,308,370,308,438,325,482,347,470,355],
  [360,238,385,232,440,250,395,255],
  [420,262,465,255,530,275,490,285],
  [545,298,570,295,700,330,730,365,660,350,580,330],
  [495,195,560,205,700,245,700,265,615,245,560,220],
  [615,250,700,270,700,295,610,262],
  [572,398,640,378,733,405,733,430,890,488,855,502],
  [870,265,985,245,1082,268,1328,312,1230,362,1020,330,960,315],
];
shadows.forEach(s => poly(s, '#808080'));
// tagli bianchi nelle ombre
svg += '<path d="M975 285L1260 330" stroke="#fff" stroke-width="3"/>';
svg += '<path d="M205 236l40 8M225 255l50 7M370 238l35 8M440 265l40 8" stroke="#fff" stroke-width="5"/>';

// front: x0,yt0,yb0, x1,yt1,yb1 | side: x2,yt2,yb2
function box(x0, t0, b0, x1, t1, b1, x2, t2, b2, inset) {
  const topX = x0 + x2 - x1, topY = t0 + t2 - t1;
  poly([x0,t0,x1,t1,x2,t2,topX,topY], '#111');
  poly([x0,t0,x1,t1,x1,b1,x0,b0], '#161616');
  poly([x1,t1,x2,t2,x2,b2,x1,b1], '#858585');
  poly([x1,t1,x1+3,t1,x1+3,b1,x1,b1], '#c4c4c4');
  poly([x2-4,t2,x2,t2,x2,b2,x2-4,b2], '#2a2a2a');
  if (inset) {
    const m = 0.2;
    poly([x0+(x2-x1)*m+12,t0+1,x1-4,t1-2,x1+(x2-x1)*.8,t1+(t2-t1)*.8,topX+(x1-x0)*.4,topY+6], '#808080');
  }
}

const boxes = [
  [116,57,136,129,58,139,139,57,137],
  [158,62,148,170,62,151,182,62,149],
  [212,56,130,226,56,133,236,55,131],
  [484,66,156,504,66,160,514,65,155],
  [576,56,110,592,56,110,602,56,110],
  [655,60,140,671,60,144,684,59,142],
  [747,65,150,769,65,156,779,65,152],
  [298,122,175,340,124,190,346,124,188],
  [378,118,190,445,122,188,455,120,178],
  [500,132,190,555,135,205,566,130,198],
  [344,82,195,364,82,202,380,82,197],
  [612,145,218,665,152,222,675,150,215],
  [208,190,215,250,205,228,292,190,212,1],
  [270,212,240,310,225,252,356,215,247,1],
  [385,196,222,428,210,236,466,205,230,1],
  [415,172,190,445,180,200,487,175,198,1],
  [465,220,245,520,235,262,560,228,258,1],
  [666,158,232,730,165,245,778,165,190],
  [680,188,265,758,195,270,815,195,235,1],
  [562,104,258,590,104,264,611,104,258],
  [568,276,298,597,285,311,624,282,306,1],
  [438,300,328,470,310,337,496,308,335,1],
  [700,228,330,810,245,345,868,238,290,1],
  [856,200,225,930,205,232,958,205,232],
  [872,108,268,912,110,280,928,110,276],
  [910,265,290,950,275,300,968,270,295],
  [733,295,430,888,330,488,960,312,460,1],
  // blocchi grandi a destra
  [985,98,245,1025,100,250,1040,100,250],
  [1040,218,250,1082,230,265,1082,230,265],
  [1385,70,283,1397,70,285,1440,68,268],
  [1082,68,268,1328,78,312,1380,70,285],
];
boxes.forEach(b => box(...b));
svg += '</g>';
model.innerHTML = svg;

// albero del project browser
const rows = [
  ['Views (all)', 0, '-', 'view'], ['Floor Plans', 1, '-'], ['Level 1', 2], ['Level 2', 2], ['Site', 2],
  ['Ceiling Plans', 1, '-'], ['Level 1', 2], ['Level 2', 2, '', '', true], ['3D Views', 1, '+'],
  ['Elevations (Building', 1, '-'], ['East', 2], ['North', 2], ['South', 2], ['West', 2],
  ['Legends', 0, '', 'sheet'], ['Schedules/Quantities', 0, '+', 'sheet'], ['Sheets (all)', 0, '', 'sheet'],
  ['Families', 0, '-', 'fam'], ['Annotation Symbol:', 1, '+'], ['Cable Trays', 1, '+'], ['Ceilings', 1, '+'],
  ['Columns', 1, '+'], ['Conduits', 1, '+'], ['Curtain Panels', 1, '+'], ['Curtain Systems', 1, '+'],
  ['Curtain Wall Mullion', 1, '+'], ['Detail Items', 1, '+'], ['Doors', 1, '+'], ['Duct Systems', 1, '+'],
  ['Ducts', 1, '+'], ['Flex Ducts', 1, '+'], ['Flex Pipes', 1, '+'], ['Floors', 1, '+'],
];
const left = [26, 29, 41];
const boxX = [3, 15];
document.getElementById('tree').innerHTML = rows.map(([label, level, sign, icon, selected]) => {
  const expander = sign ? `<svg class="absolute top-[1px] w-[8px] h-[8px]" style="left:${boxX[level]}px" viewBox="0 0 8 8"><rect x=".5" y=".5" width="7" height="7" fill="#f2f2f2" stroke="#aaa"/><path d="M2 4h4${sign === '+' ? 'M4 2v4' : ''}" stroke="#667"/></svg>` : '';
  const line = level === 2 ? '<span class="absolute left-[30px] top-[5px] w-[10px] h-px bg-[#ccc]"></span>' : (level === 1 ? '<span class="absolute left-[23px] top-[5px] w-[6px] h-px bg-[#ccc]"></span>' : '');
  const glyph = icon ? `<svg class="absolute left-[14px] top-0 w-[10px] h-[10px]" viewBox="0 0 10 10"><rect x=".5" y="1.500" width="9" height="7" fill="${icon === 'view' ? 'none' : '#ddd'}" stroke="#777"/><path d="M.5 4h9M4 1.500v7" stroke="#999"/></svg>` : '';
  const text = selected ? `<span class="bg-[#e4e4e4] px-px -mx-px">${label}</span>` : label;
  return `<div class="relative h-[10.560px] leading-[10.560px] whitespace-nowrap" style="padding-left:${left[level]}px">${expander}${glyph}${line}${text}</div>`;
}).join('') + '<span class="absolute left-[6px] top-[10px] w-px h-[180px] bg-[#dcdcdc]"></span><span class="absolute left-[19px] top-[20px] w-px h-[90px] bg-[#dcdcdc]"></span><span class="absolute left-[30px] top-[32px] w-px h-[18px] bg-[#dcdcdc]"></span><span class="absolute left-[30px] top-[74px] w-px h-[18px] bg-[#dcdcdc]"></span><span class="absolute left-[30px] top-[116px] w-px h-[26px] bg-[#dcdcdc]"></span>';
</script>
</body>
</html>
